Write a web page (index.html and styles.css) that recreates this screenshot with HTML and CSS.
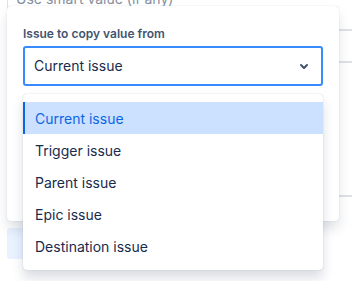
FILE: index.html
```html
<!DOCTYPE html>
<html lang="en">
<head>
  <meta charset="UTF-8">
  <title>Copy value from</title>
  <link rel="stylesheet" href="styles.css">
</head>
<body>
  <div class="page">
    <div class="bg-row bg-row-first">
      <span class="bg-text">Use smart value (if any)</span>
    </div>
    <div class="bg-row"></div>
    <div class="bg-row bg-row-tall"></div>
    <div class="bg-actions">
      <div class="bg-button"></div>
    </div>
  </div>

  <div class="popover">
    <label class="field-label">Issue to copy value from</label>
    <div class="select">
      <span class="select-value">Current issue</span>
      <svg class="chevron" width="24" height="24" viewBox="0 0 24 24">
        <path fill="#44546f" d="M8.292 10.293a1.01 1.01 0 000 1.419l2.939 2.965c.218.215.5.322.779.322s.556-.107.769-.322l2.93-2.955a1.01 1.01 0 000-1.419.987.987 0 00-1.406 0l-2.298 2.317-2.307-2.327a.99.99 0 00-1.406 0z"/>
      </svg>
    </div>

    <ul class="menu">
      <li class="menu-item selected">Current issue</li>
      <li class="menu-item">Trigger issue</li>
      <li class="menu-item">Parent issue</li>
      <li class="menu-item">Epic issue</li>
      <li class="menu-item">Destination issue</li>
    </ul>
  </div>
</body>
</html>
```

FILE: styles.css
```css
* {
  margin: 0;
  padding: 0;
  box-sizing: border-box;
}

body {
  width: 352px;
  height: 281px;
  overflow: hidden;
  position: relative;
  background: #fff;
  font-family: Inter, -apple-system, "Segoe UI", Roboto, sans-serif;
  color: #172b4d;
}

/* page behind the popover */
.page {
  padding-left: 7px;
}

.bg-row {
  height: 32px;
  border-bottom: 2px solid #dfe1e6;
  border-left: 1px solid #dfe1e6;
}

.bg-row-first {
  height: 31px;
  overflow: hidden;
  padding-left: 8px;
}

.bg-text {
  display: block;
  margin-top: -9px;
  font-size: 14px;
  line-height: 16px;
  color: #8590a2;
}

.bg-row-tall {
  height: 134px;
  border-left: none;
}

.bg-actions {
  padding-top: 31px;
}

.bg-button {
  width: 110px;
  height: 31px;
  background: #e9f2ff;
  border-radius: 3px;
}

/* popover */
.popover {
  position: absolute;
  left: 7px;
  top: 6px;
  width: 332px;
  height: 215px;
  padding: 20px 16px;
  background: #fff;
  border-radius: 4px;
  box-shadow: 0 8px 12px rgba(9, 30, 66, 0.12), 0 0 1px rgba(9, 30, 66, 0.25);
}

.field-label {
  display: block;
  font-size: 12px;
  font-weight: 600;
  line-height: 16px;
  color: #44546f;
  margin-bottom: 4px;
}

.select {
  display: flex;
  align-items: center;
  justify-content: space-between;
  height: 40px;
  padding: 0 5px 0 9px;
  border: 2px solid #388bff;
  border-radius: 3px;
}

.select-value {
  font-size: 14px;
  line-height: 20px;
}

.menu {
  position: absolute;
  left: 16px;
  top: 88px;
  width: 300px;
  list-style: none;
  padding: 8px 0;
  background: #fff;
  border-radius: 4px;
  box-shadow: 0 8px 12px rgba(9, 30, 66, 0.15), 0 0 1px rgba(9, 30, 66, 0.31);
}

.menu-item {
  height: 32px;
  padding-left: 12px;
  display: flex;
  align-items: center;
  font-size: 14px;
  color: #172b4d;
}

.menu-item.selected {
  background: #cce0ff;
  color: #0c66e4;
  box-shadow: inset 2px 0 0 #0c66e4;
}
```
